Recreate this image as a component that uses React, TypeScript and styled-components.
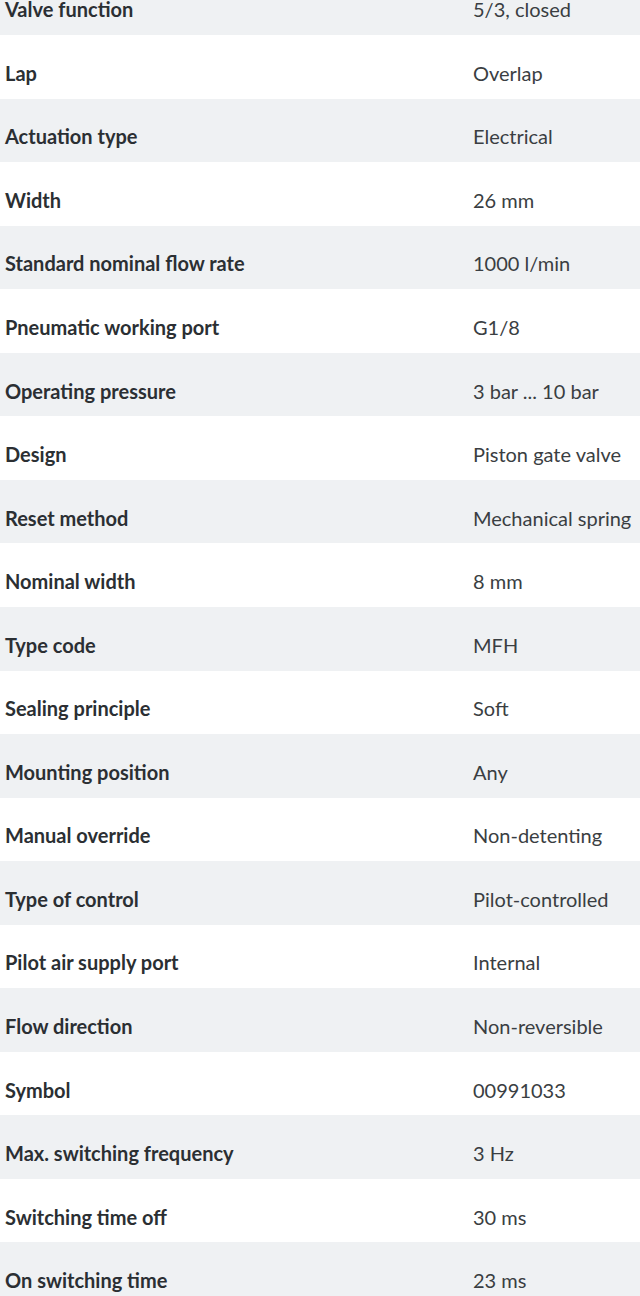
import React from "react";
import styled, { createGlobalStyle } from "styled-components";

const GlobalStyle = createGlobalStyle`
  html, body {
    margin: 0;
    padding: 0;
    background: #fff;
    overflow: hidden;
  }
`;

const specs: [string, string][] = [
  ["Valve function", "5/3, closed"],
  ["Lap", "Overlap"],
  ["Actuation type", "Electrical"],
  ["Width", "26 mm"],
  ["Standard nominal flow rate", "1000 l/min"],
  ["Pneumatic working port", "G1/8"],
  ["Operating pressure", "3 bar ... 10 bar"],
  ["Design", "Piston gate valve"],
  ["Reset method", "Mechanical spring"],
  ["Nominal width", "8 mm"],
  ["Type code", "MFH"],
  ["Sealing principle", "Soft"],
  ["Mounting position", "Any"],
  ["Manual override", "Non-detenting"],
  ["Type of control", "Pilot-controlled"],
  ["Pilot air supply port", "Internal"],
  ["Flow direction", "Non-reversible"],
  ["Symbol", "00991033"],
  ["Max. switching frequency", "3 Hz"],
  ["Switching time off", "30 ms"],
  ["On switching time", "23 ms"],
];

const SpecTable = styled.div`
  margin-top: -28.5px;
  width: 640px;
  font-family: Lato, "Liberation Sans", sans-serif;
  font-size: 20px;
  line-height: 24px;
`;

const SpecRow = styled.div<{ $shaded: boolean }>`
  display: grid;
  grid-template-columns: 473px 1fr;
  align-items: center;
  box-sizing: border-box;
  height: 63.55px;
  padding-top: 12px;
  background: ${(p) => (p.$shaded ? "#eff1f3" : "#ffffff")};
`;

const Label = styled.div`
  padding-left: 5px;
  font-weight: 700;
  color: #2b2f33;
  white-space: nowrap;
`;

const Value = styled.div`
  font-weight: 400;
  color: #3a3e42;
  white-space: nowrap;
`;

export default function App() {
  return (
    <>
      <GlobalStyle />
      <SpecTable>
        {specs.map(([label, value], i) => (
          <SpecRow $shaded={i % 2 === 0} key={`spec_${i}`}>
            <Label>{label}</Label>
            <Value>{value}</Value>
          </SpecRow>
        ))}
      </SpecTable>
    </>
  );
}
